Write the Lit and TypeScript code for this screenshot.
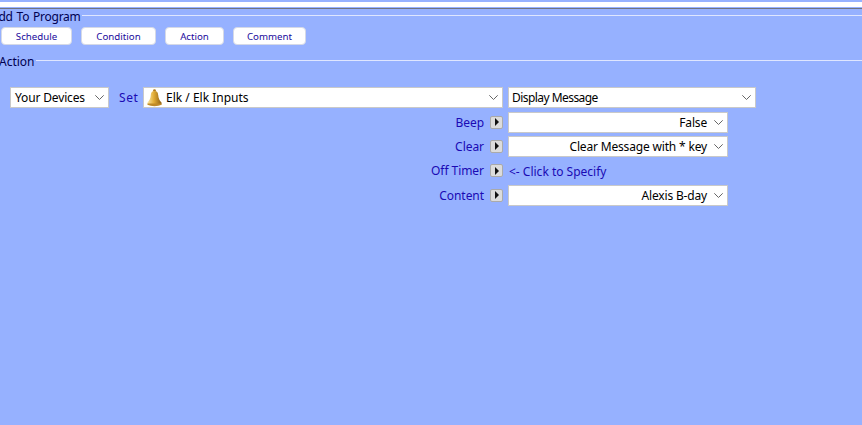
import { LitElement, html, css, svg } from "lit";
import { customElement } from "lit/decorators.js";

const chev = svg`<svg class="chev" width="9" height="5" viewBox="0 0 9 5"><path d="M0.3 0.3 L4.5 4.5 L8.7 0.3" fill="none" stroke="#666" stroke-width="1"/></svg>`;
const arrow = html`<span class="arrow"><svg width="6" height="8" viewBox="0 0 6 8"><path d="M1 0 L5 4 L1 8 Z" fill="#111"/></svg></span>`;

@customElement("app-root")
export class AppRoot extends LitElement {
  static styles = css`
    :host { display: block; width: 862px; height: 425px; overflow: hidden; background: #96b1ff;
      font-family: "Noto Sans", Tahoma, sans-serif; font-size: 12px; color: #000; }
    .top { height: 5px; margin-top: 2px; background: #fff; }
    .topline { height: 1px; margin-top: 1px; background: #70747f; }
    .legend { display: flex; align-items: center; height: 14px; white-space: nowrap; color: #000050; }
    .legend span { flex: none; padding-top: 2px; }
    .legend i { flex: 1; height: 1px; background: #dfe6ff; margin-left: 1px; }
    .l1 { margin-top: -1px; }
    .l1 span { margin-left: -9px; word-spacing: 1px; letter-spacing: -0.25px; }
    .l2 { margin-top: 8px; }
    .l2 span { margin-left: -1px; }
    .buttons { display: flex; margin: 5px 0 0 1px; gap: 9px; }
    .btn { height: 18px; box-sizing: border-box; border: 1px solid #d5d9e6; border-radius: 4px; background: #fff;
      color: #1a0a9c; font-size: 9.7px; display: flex; align-items: center; justify-content: center; }
    .main { display: flex; margin: 20px 0 0 10px; align-items: flex-start; }
    .sel { box-sizing: border-box; background: #fff; border: 1px solid #c9c9c9; height: 21px; display: flex; align-items: center;
      padding: 0 4px 0 4px; color: #000; white-space: nowrap; }
    .sel .t { flex: 1; }
    .sel .r { text-align: right; margin-right: 7px; }
    .chev { flex: none; }
    .set { color: #1a0ab4; width: 34px; box-sizing: border-box; padding-left: 10px; line-height: 22px; letter-spacing: 0.6px; }
    .form { margin-top: 1px; }
    .row { display: flex; align-items: center; height: 24.33px; }
    .lab { width: 484px; text-align: right; color: #1a0ab4; letter-spacing: -0.05px; }
    .arrow { box-sizing: border-box; width: 13px; height: 13px; background: #dcdcdc; border: 1px solid #aaa; border-radius: 2px;
      margin: 0 5px 0 6px; display: flex; align-items: center; justify-content: center; }
    .link { color: #1a0ab4; margin: 1px 0 0 1px; }
    .dev { width: 99px; }
    .dev .t { letter-spacing: -0.15px; }
    .elk { width: 360px; margin-right: 5px; padding-left: 3px; }
    .bell { margin-right: 4px; flex: none; }
    .msg { width: 248px; padding-left: 3px; }
    .msg .t { letter-spacing: -0.55px; }
    .val { width: 220px; }
    .val .t { letter-spacing: -0.17px; }
  `;

  row(label: string, body: unknown) {
    return html`<div class="row"><span class="lab">${label}</span>${arrow}${body}</div>`;
  }
  val(text: string) {
    return html`<div class="sel val"><span class="t r">${text}</span>${chev}</div>`;
  }

  render() {
    return html`
      <div class="top"></div>
      <div class="topline"></div>
      <div class="legend l1"><span>Add To Program</span><i></i></div>
      <div class="buttons">
        ${[["Schedule", 71], ["Condition", 75], ["Action", 59], ["Comment", 73]].map(
          ([t, w]) => html`<div class="btn" style="width:${w}px">${t}</div>`
        )}
      </div>
      <div class="legend l2"><span>Action</span><i></i></div>
      <div class="main">
        <div class="sel dev"><span class="t">Your Devices</span>${chev}</div>
        <div class="set">Set</div>
        <div class="sel elk">
          <svg class="bell" width="15" height="18" viewBox="0 0 15 18">
            <defs><linearGradient id="g" x1="0" x2="1"><stop offset="0" stop-color="#fbe6a4"/><stop offset=".45" stop-color="#e2ad37"/><stop offset="1" stop-color="#8f5f12"/></linearGradient></defs>
            <circle cx="7.5" cy="1.6" r="1.4" fill="#b07a1e"/>
            <path d="M7.5 2 C10 2 11 3.5 11.2 6 C11.4 9.5 12.5 11.5 14.5 13.5 L14.5 15.5 L0.5 15.5 L0.5 13.5 C2.5 11.5 3.6 9.5 3.8 6 C4 3.5 5 2 7.5 2 Z" fill="url(#g)"/>
            <path d="M0.5 14.5 L14.5 14.5 L14.5 15.8 C11 17.6 4 17.6 0.5 15.8 Z" fill="#c08a28"/>
          </svg>
          <span class="t">Elk / Elk Inputs</span>${chev}
        </div>
        <div class="sel msg"><span class="t">Display Message</span>${chev}</div>
      </div>
      <div class="form">
        ${this.row("Beep", this.val("False"))}
        ${this.row("Clear", this.val("Clear Message with * key"))}
        ${this.row("Off Timer", html`<span class="link">&lt;- Click to Specify</span>`)}
        ${this.row("Content", this.val("Alexis B-day"))}
      </div>
    `;
  }
}
